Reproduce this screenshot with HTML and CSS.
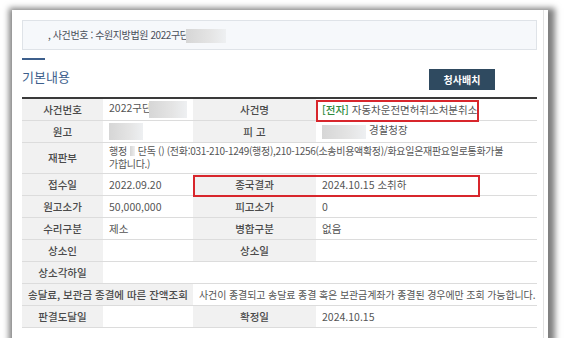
FILE: index.html
```html
<!DOCTYPE html>
<html lang="ko">

<head>
    <meta charset="UTF-8">
    <title>사건일반내용</title>
    <link rel="stylesheet" href="styles.css">
</head>

<body>
    <div class="shot">
        <div class="card">
            <div class="inner">
                <div class="case-info">, 사건번호 : 수원지방법원 2022구단<span class="mask mask-head"></span></div>

                <div class="sec-head">
                    <h2 class="sec-title">기본내용</h2>
                    <button class="btn-map">청사배치</button>
                </div>

                <div class="table-wrap">
                    <table class="info">
                        <colgroup>
                            <col class="c1">
                            <col class="c2">
                            <col class="c3">
                            <col class="c4">
                        </colgroup>
                        <tr>
                            <th>사건번호</th>
                            <td>2022구단<span class="mask mask-no"></span></td>
                            <th>사건명</th>
                            <td><span class="green">[전자]</span> 자동차운전면허취소처분취소</td>
                        </tr>
                        <tr>
                            <th>원고</th>
                            <td><span class="mask mask-won"></span></td>
                            <th>피 고</th>
                            <td><span class="mask mask-pi"></span>경찰청장</td>
                        </tr>
                        <tr class="tall">
                            <th>재판부</th>
                            <td colspan="3" class="multi">행정<span class="mask mask-bu"></span>단독 () (전화:031-210-1249(행정),210-1256(소송비용액확정)/화요일은재판요일로통화가불<br>가합니다.)</td>
                        </tr>
                        <tr>
                            <th>접수일</th>
                            <td>2022.09.20</td>
                            <th>종국결과</th>
                            <td>2024.10.15 소취하</td>
                        </tr>
                        <tr>
                            <th>원고소가</th>
                            <td>50,000,000</td>
                            <th>피고소가</th>
                            <td>0</td>
                        </tr>
                        <tr>
                            <th>수리구분</th>
                            <td>제소</td>
                            <th>병합구분</th>
                            <td>없음</td>
                        </tr>
                        <tr>
                            <th>상소인</th>
                            <td></td>
                            <th>상소일</th>
                            <td></td>
                        </tr>
                        <tr>
                            <th>상소각하일</th>
                            <td colspan="3"></td>
                        </tr>
                        <tr>
                            <th colspan="2">송달료, 보관금 종결에 따른 잔액조회</th>
                            <td colspan="2" class="note">사건이 종결되고 송달료 종결 혹은 보관금계좌가 종결된 경우에만 조회 가능합니다.</td>
                        </tr>
                        <tr>
                            <th>판결도달일</th>
                            <td></td>
                            <th>확정일</th>
                            <td>2024.10.15</td>
                        </tr>
                    </table>
                    <!-- 강조 표시 -->
                    <div class="mark mark-name"></div>
                    <div class="mark mark-result"></div>
                </div>
            </div>
        </div>
    </div>
</body>

</html>
```

FILE: styles.css
```css
body {
    margin: 0;
    background: #fff;
    font-family: "Noto Sans CJK KR", "Noto Sans", sans-serif;
}

.shot {
    padding: 10px 0 0 12px;
}

.card {
    width: 532px;
    padding: 0 4px 0 0;
    background: #fff;
    box-shadow: 2px 3px 6px 5px rgba(0, 0, 0, 0.5);
}

.inner {
    padding: 10px 6px 10px 10px;
    border-right: 1px solid #e2e2e2;
}

.case-info {
    height: 30px;
    box-sizing: border-box;
    padding-left: 25px;
    border: 1px solid #dfe3e8;
    background: #f6f8fb;
    font-size: 10px;
    line-height: 28px;
    color: #4a4f5a;
    letter-spacing: -0.4px;
}

.mask {
    display: inline-block;
    vertical-align: middle;
    background: linear-gradient(90deg, #d6d6d6, #e4e4e4 60%, #eef0f2);
    filter: blur(0.6px);
}

.mask-head {
    width: 40px;
    height: 14px;
    margin-left: -3px;
}

.mask-no {
    width: 38px;
    height: 17px;
    margin-left: -3px;
}

.mask-won {
    width: 34px;
    height: 17px;
}

.mask-pi {
    width: 44px;
    height: 14px;
    margin-right: 3px;
}

.mask-bu {
    width: 5px;
    height: 10px;
    margin: 0 3px;
    vertical-align: -1px;
}

.sec-head {
    display: flex;
    justify-content: space-between;
    align-items: flex-end;
    height: 36px;
    margin-top: 11px;
    padding-bottom: 7px;
    box-sizing: border-box;
}

.sec-title {
    margin: 0 0 5px;
    padding-top: 4px;
    position: relative;
    font-size: 13px;
    font-weight: 400;
    color: #3d5f8c;
    line-height: 16px;
}

.sec-title::before {
    content: "";
    position: absolute;
    left: 0;
    top: -7px;
    width: 23px;
    height: 2px;
    background: #3d5f8c;
}

.btn-map {
    width: 66px;
    height: 21px;
    margin-right: 42px;
    border: 0;
    background: #2f4a60;
    color: #fff;
    font-family: inherit;
    font-size: 10px;
    font-weight: 700;
}

.table-wrap {
    position: relative;
}

.info {
    width: 515px;
    border-collapse: collapse;
    border-top: 2px solid #3a3a3a;
    table-layout: fixed;
    font-size: 10.5px;
}

.c1 { width: 81px; }
.c2 { width: 90px; }
.c3 { width: 123px; }
.c4 { width: 221px; }

.info tr {
    height: 22px;
}

.info tr.tall {
    height: 31px;
}

.info th,
.info td {
    padding: 0 6px;
    border-bottom: 1px solid #dcdcdc;
    line-height: 13px;
    white-space: nowrap;
    overflow: hidden;
}

.info th {
    background: #f1f1f1;
    color: #4a4a4a;
    font-weight: 500;
    text-align: center;
}

.info td {
    color: #555;
    text-align: left;
}

.info td.multi {
    font-size: 10px;
    line-height: 13px;
    padding-top: 0;
    padding-bottom: 1px;
    letter-spacing: -0.3px;
}

.info td.note {
    font-size: 10px;
    letter-spacing: -0.1px;
}

.green {
    color: #2f8a3c;
    font-weight: 500;
}

.mark {
    position: absolute;
    border: 2px solid #d8262c;
    box-sizing: border-box;
}

.mark-name {
    top: 3px;
    left: 294px;
    width: 163px;
    height: 22px;
}

.mark-result {
    top: 78px;
    left: 171px;
    width: 287px;
    height: 22px;
}
```
